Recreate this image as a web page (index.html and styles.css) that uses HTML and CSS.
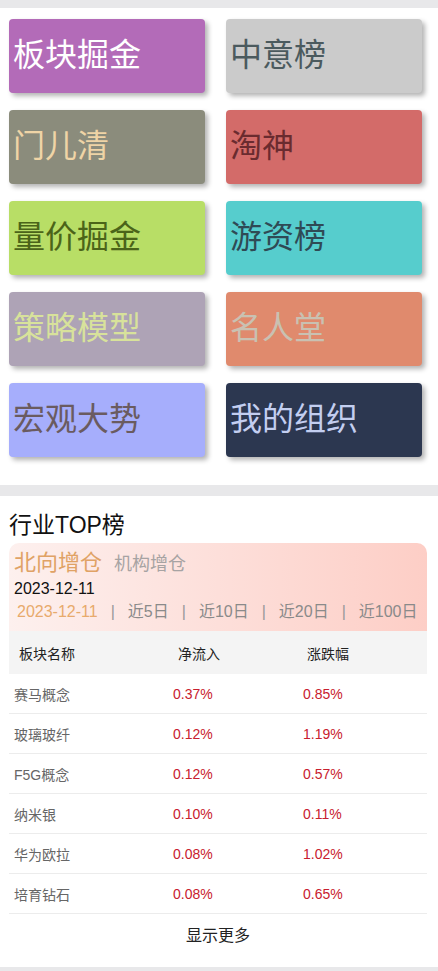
FILE: index.html
```html
<!DOCTYPE html>
<html lang="zh-CN">
<head>
  <meta charset="UTF-8" />
  <meta name="viewport" content="width=device-width, initial-scale=1.0" />
  <title>掘金</title>
  <link rel="stylesheet" href="styles.css">
</head>

<body>
  <div class="band"></div>

  <div class="menu">
    <div class="tile purple">板块掘金</div>
    <div class="tile silver">中意榜</div>
    <div class="tile olive">门儿清</div>
    <div class="tile red">淘神</div>
    <div class="tile lime">量价掘金</div>
    <div class="tile teal">游资榜</div>
    <div class="tile mauve">策略模型</div>
    <div class="tile salmon">名人堂</div>
    <div class="tile blue">宏观大势</div>
    <div class="tile navy">我的组织</div>
  </div>

  <div class="band thick"></div>

  <div class="top">
    <div class="top-title">行业TOP榜</div>

    <div class="panel">
      <div class="panel-tabs">
        <span class="main-tab">北向增仓</span>
        <span class="sub-tab">机构增仓</span>
      </div>
      <div class="panel-date">2023-12-11</div>
      <div class="periods">
        <span class="period active">2023-12-11</span>
        <span class="sep">|</span>
        <span class="period">近5日</span>
        <span class="sep">|</span>
        <span class="period">近10日</span>
        <span class="sep">|</span>
        <span class="period">近20日</span>
        <span class="sep">|</span>
        <span class="period">近100日</span>
      </div>
    </div>

    <div class="table">
      <div class="row head">
        <div class="c1">板块名称</div>
        <div class="c2">净流入</div>
        <div class="c3">涨跌幅</div>
      </div>
      <div class="row">
        <div class="c1">赛马概念</div>
        <div class="c2 up">0.37%</div>
        <div class="c3 up">0.85%</div>
      </div>
      <div class="row">
        <div class="c1">玻璃玻纤</div>
        <div class="c2 up">0.12%</div>
        <div class="c3 up">1.19%</div>
      </div>
      <div class="row">
        <div class="c1">F5G概念</div>
        <div class="c2 up">0.12%</div>
        <div class="c3 up">0.57%</div>
      </div>
      <div class="row">
        <div class="c1">纳米银</div>
        <div class="c2 up">0.10%</div>
        <div class="c3 up">0.11%</div>
      </div>
      <div class="row">
        <div class="c1">华为欧拉</div>
        <div class="c2 up">0.08%</div>
        <div class="c3 up">1.02%</div>
      </div>
      <div class="row">
        <div class="c1">培育钻石</div>
        <div class="c2 up">0.08%</div>
        <div class="c3 up">0.65%</div>
      </div>
    </div>

    <div class="more">显示更多</div>
  </div>

  <div class="band"></div>
</body>
</html>
```

FILE: styles.css
```css
body {
  margin: 0;
  padding: 0;
  background-color: white;
  font-family: "Liberation Sans", "Noto Sans CJK SC", sans-serif;
}

.band {
  height: 8px;
  background-color: #e8e8ea;
}

.band.thick {
  height: 11px;
}

.menu {
  display: grid;
  grid-template-columns: 196px 196px;
  grid-auto-rows: 74px;
  column-gap: 21px;
  row-gap: 17px;
  padding: 11px 16px 28px 9px;
}

.tile {
  display: flex;
  align-items: center;
  padding: 0 0 8px 4px;
  border-radius: 4px;
  box-shadow: 3px 3px 5px rgba(0, 0, 0, 0.3);
  font-size: 32px;
}

.purple { background-color: #b36bb8; color: #ffffff; }
.silver { background-color: #cbcbcb; color: #4b5a5e; }
.olive { background-color: #8b8c7c; color: #efd4a6; }
.red { background-color: #d36b69; color: #6a2b2f; }
.lime { background-color: #b8de66; color: #4b6419; }
.teal { background-color: #56cdcd; color: #2f4a55; }
.mauve { background-color: #aea3b6; color: #d8e29b; }
.salmon { background-color: #e08a6d; color: #c9c1b2; }
.blue { background-color: #a6aefc; color: #6a5b60; }
.navy { background-color: #2c3750; color: #c3cef0; }

.top {
  padding: 14px 11px 9px 9px;
}

.top-title {
  font-size: 23px;
  line-height: 30px;
  color: #111;
  margin-bottom: 3px;
}

.panel {
  padding: 5px 5px 7px 5px;
  border-radius: 10px 10px 0 0;
  background: linear-gradient(to right, #fdf0ee, #fdcec6);
}

.panel-tabs {
  display: flex;
  align-items: baseline;
  gap: 12px;
  height: 30px;
  line-height: 30px;
}

.main-tab {
  font-size: 22px;
  color: #e0a265;
}

.sub-tab {
  font-size: 18px;
  color: #a7a3a3;
}

.panel-date {
  font-size: 16px;
  line-height: 22px;
  color: #111;
}

.periods {
  display: flex;
  padding-left: 3px;
  font-size: 16px;
  line-height: 24px;
  color: #8a8a8a;
}

.period.active {
  color: #e8aa6c;
}

.sep {
  padding: 0 13px;
  color: #999;
}

.row {
  display: grid;
  grid-template-columns: 164px 130px 1fr;
  height: 39px;
  align-items: center;
  border-bottom: 1px solid #ececec;
  font-size: 14px;
}

.row.head {
  height: 43px;
  border-bottom: none;
  background-color: #f4f4f4;
  color: #222;
}

.row .c1 {
  padding-left: 5px;
  color: #666;
}

.row.head .c1 {
  padding-left: 10px;
  color: #222;
}

.row.head .c2 {
  padding-left: 5px;
}

.row.head .c3 {
  padding-left: 4px;
}

.up {
  color: #c8202e;
}

.more {
  height: 44px;
  line-height: 44px;
  text-align: center;
  font-size: 16px;
  color: #222;
}
```
